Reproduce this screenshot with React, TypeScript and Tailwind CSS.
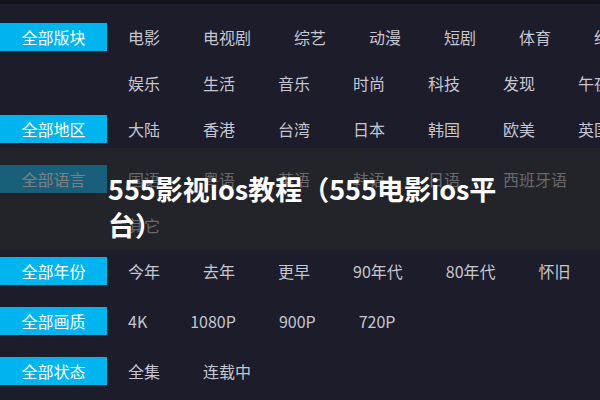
/**
 * Filter panel with title overlay
 */

const groups: { label: string; items: string[] }[] = [
  {
    label: '全部版块',
    items: ['电影', '电视剧', '综艺', '动漫', '短剧', '体育', '纪录', '娱乐', '生活', '音乐', '时尚', '科技', '发现', '午夜'],
  },
  { label: '全部地区', items: ['大陆', '香港', '台湾', '日本', '韩国', '欧美', '英国'] },
  { label: '全部语言', items: ['国语', '粤语', '英语', '韩语', '日语', '西班牙语', '其它'] },
  { label: '全部年份', items: ['今年', '去年', '更早', '90年代', '80年代', '怀旧'] },
  { label: '全部画质', items: ['4K', '1080P', '900P', '720P'] },
  { label: '全部状态', items: ['全集', '连载中'] },
];

function FilterGroup({ label, items }: { label: string; items: string[] }) {
  return (
    <div className="flex items-start">
      <div className="w-[107px] h-[28px] mb-[22px] shrink-0 bg-[#00b5ef] text-white text-[16px] leading-[29px] text-center">
        {label}
      </div>
      <ul className="ml-[21px] w-[506px] flex flex-wrap gap-x-[43px]">
        {items.map((item) => (
          <li key={item} className="h-[28px] mb-[18px] leading-[29px] text-[16px] text-[#c6c6d0] whitespace-nowrap">
            {item}
          </li>
        ))}
      </ul>
    </div>
  );
}

export default function App() {
  return (
    <div className="relative w-[600px] h-[400px] overflow-hidden bg-[#1c1c2b] font-['Noto_Sans_CJK_SC','Microsoft_YaHei',sans-serif]">
      <div className="h-[4px] bg-[#12121b]" />
      <div className="w-[640px] pt-[19px]">
        {groups.map((g) => (
          <FilterGroup key={g.label} label={g.label} items={g.items} />
        ))}
      </div>

      <div className="absolute left-0 top-[148px] w-full h-[102px] bg-[rgba(40,40,42,0.6)]">
        <h1 className="ml-[108px] mt-[23px] w-[400px] text-[27px] leading-[36px] font-bold text-white">
          555影视ios教程（555电影ios平台）
        </h1>
      </div>
    </div>
  );
}
